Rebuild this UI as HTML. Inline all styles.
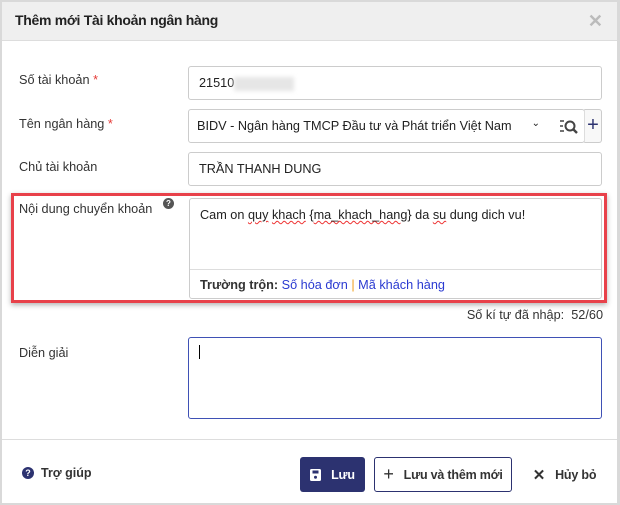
<!DOCTYPE html>
<html><head><meta charset="utf-8"><style>
*{box-sizing:border-box;margin:0;padding:0}
body{width:620px;height:505px;background:#d9d9d9;font-family:"Liberation Sans",Arial,sans-serif;font-size:12.7px;color:#212121;position:relative;overflow:hidden}
.dlg{position:absolute;left:2px;top:2px;width:615px;height:501px;background:#fff}
.hd{position:absolute;left:0;top:0;width:100%;height:39px;background:#efefef;border-bottom:1px solid #ddd}
.hd h1{position:absolute;left:13px;top:10px;font-size:14px;letter-spacing:-.3px;font-weight:bold;color:#222}
.x{position:absolute;right:14px;top:9px;font-size:18px;color:#bbb;font-weight:bold}
.lbl{position:absolute;left:17px;color:#333}
.req{color:#e53935}
.in{position:absolute;left:186px;width:414px;height:34px;border:1px solid #ccc;border-radius:3px;padding:9px 10px}
.red{position:absolute;left:9px;top:191px;width:596px;height:110px;border:3px solid #e8414a;box-shadow:0 2px 5px rgba(0,0,0,.3)}
.ta{position:absolute;left:187px;top:196px;width:413px;height:101px;border:1px solid #ccc;border-radius:3px}
.ta .t{position:absolute;left:10px;top:9px}
.ta .f{position:absolute;left:0;right:0;top:70px;border-top:1px solid #ddd;padding:8px 10px}
.lnk{color:#2a3ad1}
.sq{text-decoration:underline wavy #e33;text-decoration-thickness:1px}
.btn{position:absolute;top:455px;height:35px;border-radius:3px;font-size:12.5px;font-weight:bold;letter-spacing:-.2px;display:flex;align-items:center;justify-content:center;gap:10px}
</style></head><body>
<div class="dlg">
<div class="hd"><h1>Thêm mới Tài khoản ngân hàng</h1><span class="x">✕</span></div>
<div class="lbl" style="top:71px">Số tài khoản <span class="req">*</span></div>
<div class="in" style="top:64px">21510<span style="display:inline-block;width:60px;height:14px;background:#e6e6e6;vertical-align:middle;filter:blur(2px)"></span></div>
<div class="lbl" style="top:115px">Tên ngân hàng <span class="req">*</span></div>
<div class="in" style="top:107px;width:397px;padding:9px 8px">BIDV - Ngân hàng TMCP Đầu tư và Phát triển Việt Nam<span style="position:absolute;right:44px;top:8px;font-size:10px">⌄</span>
<svg style="position:absolute;right:6px;top:9px" width="18" height="16" viewBox="0 0 18 16"><path d="M0 2h4M0 7h3M0 12h4" stroke="#444" stroke-width="1.6"/><circle cx="10" cy="7" r="4.5" stroke="#444" stroke-width="2" fill="none"/><path d="M13 10l4 4" stroke="#444" stroke-width="2.4"/></svg></div>
<div style="position:absolute;left:582px;top:107px;width:18px;height:34px;border:1px solid #ccc;border-left:1px solid #ddd;border-radius:0 3px 3px 0;background:#f8f8f8;color:#2c3270;font-size:20px;text-align:center;line-height:30px">+</div>
<div class="lbl" style="top:158px">Chủ tài khoản</div>
<div class="in" style="top:150px">TRẦN THANH DUNG</div>
<div class="red"></div>
<div class="lbl" style="top:200px">Nội dung chuyển khoản</div>
<div style="position:absolute;left:161px;top:196px;width:11px;height:11px;border-radius:50%;background:#555;color:#fff;font-size:8px;font-weight:bold;text-align:center;line-height:11px">?</div>
<div class="ta"><div class="t">Cam on <span class="sq">quy</span> <span class="sq">khach</span> {<span class="sq">ma_khach_hang</span>} da <span class="sq">su</span> dung dich vu!</div>
<div class="f"><b style="color:#333">Trường trộn:</b> <span class="lnk">Số hóa đơn</span> <span style="color:#f0a020">|</span> <span class="lnk">Mã khách hàng</span></div></div>
<div style="position:absolute;right:14px;top:306px;color:#333">Số kí tự đã nhập:&nbsp; 52/60</div>
<div class="lbl" style="top:344px">Diễn giải</div>
<div class="in" style="top:335px;height:82px;border-color:#3f51b5"><span style="display:inline-block;width:1px;height:14px;background:#000;margin-top:-2px"></span></div>
<div style="position:absolute;left:0;right:0;top:437px;border-top:1px solid #ddd"></div>
<div style="position:absolute;left:20px;top:464px;font-weight:bold;color:#333;display:flex;align-items:center;gap:7px;font-size:12.5px"><span style="width:12px;height:12px;border-radius:50%;background:#2c3270;color:#fff;font-size:9px;text-align:center;line-height:12px">?</span>Trợ giúp</div>
<div class="btn" style="left:298px;width:65px;background:#2c3270;color:#fff"><svg width="11" height="12" viewBox="0 0 11 12"><rect x="0" y="0" width="11" height="12" rx="1.5" fill="#fff"/><rect x="2.5" y="1.5" width="6" height="3" fill="#2c3270"/><circle cx="5.5" cy="8.3" r="1.5" fill="#2c3270"/></svg>Lưu</div>
<div class="btn" style="left:372px;width:138px;border:1px solid #2c3270;color:#333"><span style="font-size:18px;font-weight:normal">+</span>Lưu và thêm mới</div>
<div class="btn" style="left:525px;width:75px;color:#333"><span style="font-size:15px">✕</span>Hủy bỏ</div>
</div>
</body></html>
